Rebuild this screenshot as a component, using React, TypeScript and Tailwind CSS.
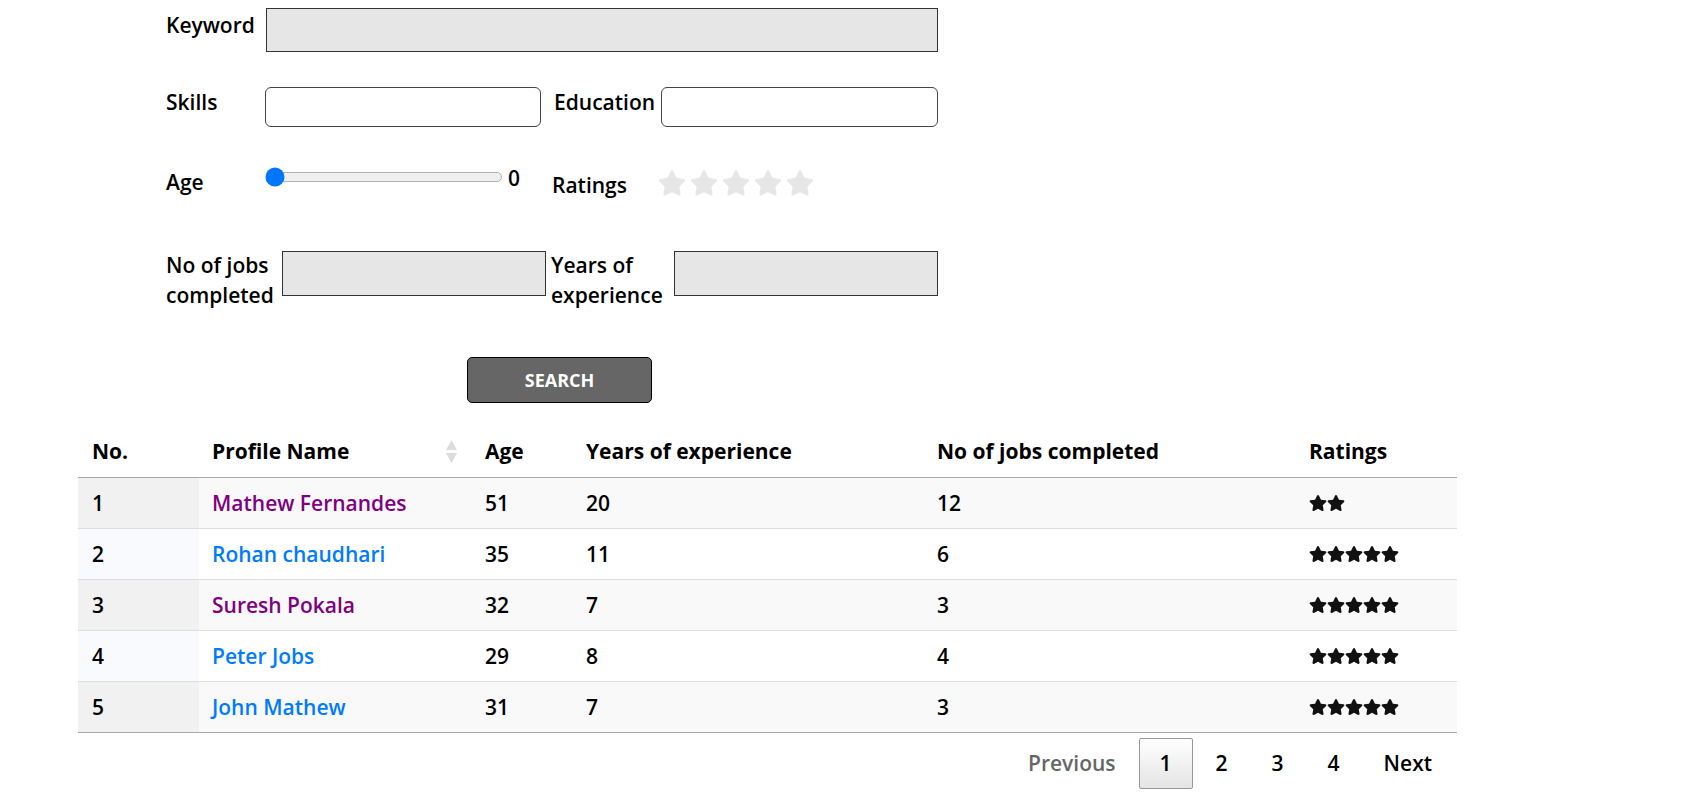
import { FaStar } from 'react-icons/fa';

type Profile = {
  no: number;
  name: string;
  visited: boolean;
  age: number;
  exp: number;
  jobs: number;
  rating: number;
};

const profiles: Profile[] = [
  { no: 1, name: 'Mathew Fernandes', visited: true, age: 51, exp: 20, jobs: 12, rating: 2 },
  { no: 2, name: 'Rohan chaudhari', visited: false, age: 35, exp: 11, jobs: 6, rating: 5 },
  { no: 3, name: 'Suresh Pokala', visited: true, age: 32, exp: 7, jobs: 3, rating: 5 },
  { no: 4, name: 'Peter Jobs', visited: false, age: 29, exp: 8, jobs: 4, rating: 5 },
  { no: 5, name: 'John Mathew', visited: false, age: 31, exp: 7, jobs: 3, rating: 5 },
];

const cols = 'grid grid-cols-[121px_273px_101px_351px_372px_161px]';

function SortIcon() {
  return (
    <svg width="11" height="23" viewBox="0 0 11 23" className="shrink-0">
      <path d="M5.5 0 L11 10 L0 10 Z" fill="#dcdcdc" />
      <path d="M0 13 L11 13 L5.5 23 Z" fill="#dcdcdc" />
    </svg>
  );
}

function Stars({ count, size, className }: { count: number; size: number; className: string }) {
  return (
    <div className={className}>
      {Array.from({ length: count }).map((_, i) => (
        <FaStar key={i} size={size} />
      ))}
    </div>
  );
}

export default function App() {
  return (
    <div className="min-h-screen bg-white text-black font-['Open_Sans',sans-serif] text-[21px] leading-[30px]">
      {/* Search form */}
      <div className="ml-[166px] w-[772px] pt-[8px]">
        <div className="flex items-start">
          <label className="mt-[2px] w-[100px] font-semibold">Keyword</label>
          <input className="h-[44px] w-[672px] border border-[#333] bg-[#e6e6e6]" />
        </div>

        <div className="mt-[35px] flex items-start">
          <label className="w-[99px] font-semibold">Skills</label>
          <input className="h-[40px] w-[276px] rounded-[6px] border border-[#444] bg-white" />
          <label className="ml-[13px] w-[107px] font-semibold">Education</label>
          <input className="h-[40px] w-[277px] rounded-[6px] border border-[#444] bg-white" />
        </div>

        <div className="mt-[36px] flex items-start">
          <label className="mt-[4px] w-[99px] font-semibold">Age</label>
          <div className="mt-[1px] h-[23px] w-[237px]">
            <input type="range" min={0} max={100} defaultValue={0} className="h-[16px] w-[190px] [zoom:1.25]" />
          </div>
          <span className="ml-[6px] w-[44px] font-semibold">0</span>
          <label className="mt-[7px] w-[106px] font-semibold">Ratings</label>
          <Stars count={5} size={28} className="mt-[6px] flex gap-[4px] text-[#e6e6e6]" />
        </div>

        <div className="mt-[50px] flex items-start">
          <label className="w-[116px] font-semibold">No of jobs completed</label>
          <input className="mt-[1px] h-[45px] w-[264px] border border-[#333] bg-[#e6e6e6]" />
          <label className="ml-[5px] w-[123px] font-semibold">Years of experience</label>
          <input className="mt-[1px] h-[45px] w-[264px] border border-[#333] bg-[#e6e6e6]" />
        </div>

        <button className="ml-[301px] mt-[47px] h-[46px] w-[185px] rounded-[5px] border border-black bg-[#666] text-[18px] font-bold text-white">
          SEARCH
        </button>
      </div>

      {/* Results table */}
      <div className="ml-[78px] mt-[22px] w-[1379px]">
        <div className={`${cols} h-[53px] border-b border-[#aaa] font-bold`}>
          <div className="flex items-center pl-[14px]">No.</div>
          <div className="flex items-center justify-between pl-[13px] pr-[15px]">
            <span>Profile Name</span>
            <SortIcon />
          </div>
          <div className="flex items-center pl-[13px]">Age</div>
          <div className="flex items-center pl-[13px]">Years of experience</div>
          <div className="flex items-center pl-[13px]">No of jobs completed</div>
          <div className="flex items-center pl-[13px]">Ratings</div>
        </div>

        {profiles.map((p, i) => {
          const odd = i % 2 === 0;
          const last = i === profiles.length - 1;
          return (
            <div
              key={p.no}
              className={`${cols} h-[51px] border-b font-semibold ${last ? 'border-[#aaa]' : 'border-[#ddd]'} ${odd ? 'bg-[#f9f9f9]' : 'bg-white'}`}
            >
              <div className={`flex items-center pl-[14px] ${odd ? 'bg-[#f1f1f1]' : 'bg-[#f9fafd]'}`}>{p.no}</div>
              <div className="flex items-center pl-[13px]">
                <a href="#" className={p.visited ? 'text-[#800080]' : 'text-[#007bff]'}>
                  {p.name}
                </a>
              </div>
              <div className="flex items-center pl-[13px]">{p.age}</div>
              <div className="flex items-center pl-[13px]">{p.exp}</div>
              <div className="flex items-center pl-[13px]">{p.jobs}</div>
              <div className="flex items-center pl-[13px]">
                <Stars count={p.rating} size={18} className="flex text-[#111]" />
              </div>
            </div>
          );
        })}

        {/* Pagination */}
        <div className="mt-[5px] flex justify-end pr-[4px] font-semibold leading-[29px]">
          <span className="border border-transparent px-[20px] py-[10px] text-[#666]">Previous</span>
          <span className="ml-[2px] rounded-[2px] border border-[#979797] bg-linear-to-b from-white to-[#e4e4e4] px-[20px] py-[10px]">
            1
          </span>
          {['2', '3', '4'].map((n) => (
            <span key={n} className="ml-[2px] border border-transparent px-[20px] py-[10px]">
              {n}
            </span>
          ))}
          <span className="ml-[2px] border border-transparent px-[20px] py-[10px]">Next</span>
        </div>
      </div>
    </div>
  );
}
